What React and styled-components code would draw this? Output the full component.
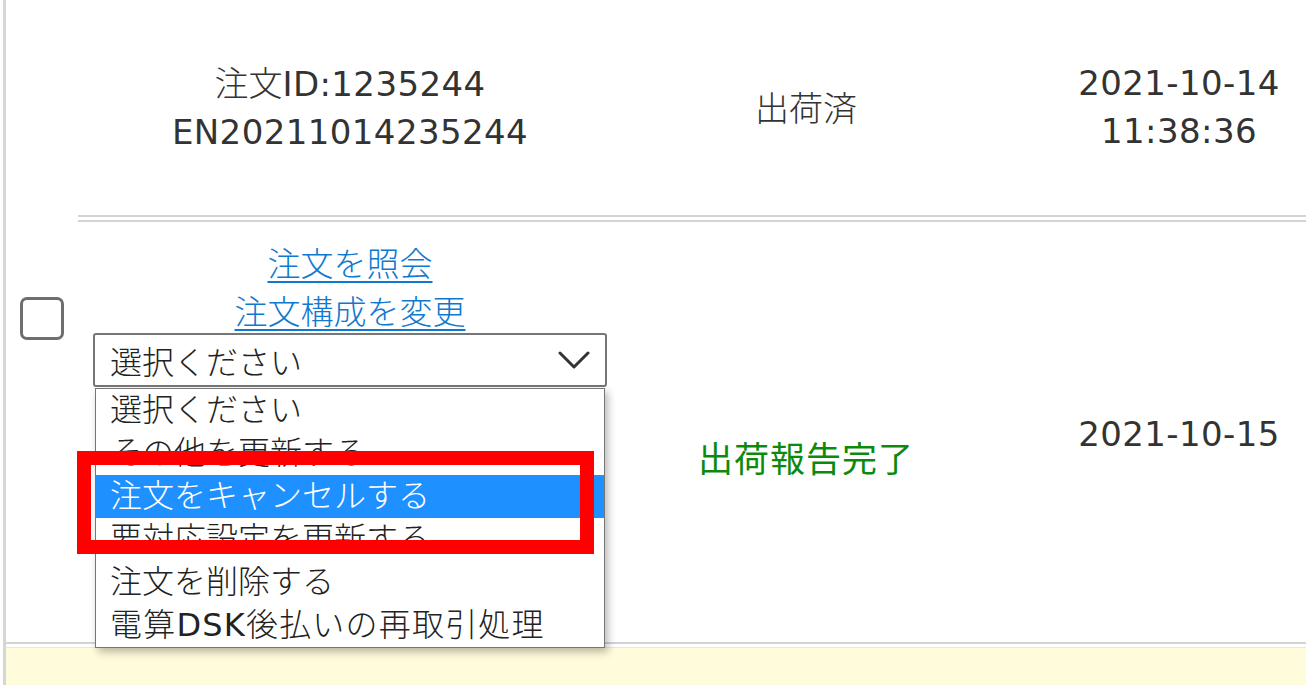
import React from "react";
import styled, { createGlobalStyle } from "styled-components";

const GlobalStyle = createGlobalStyle`
	html, body {
		margin: 0;
		padding: 0;
		background: #fff;
		overflow: hidden;
	}

	body {
		font-family: "DejaVu Sans", "Noto Sans CJK JP", sans-serif;
		color: #333;
	}
`;

const RULE = "#d3d3d3";

const Page = styled.div`
	width: 1300px;
	height: 685px;
	margin-left: 3px;
	border-left: 3px solid #d6d6d6;
	display: flex;
	flex-direction: column;
	overflow: hidden;
`;

const Row = styled.div`
	display: grid;
	grid-template-columns: 72px 544px 368px 378px;
	width: 1362px;
	height: ${(p) => p.$height}px;
	margin-top: ${(p) => p.$gap || 0}px;
	border-bottom: ${(p) => (p.$ruled ? `2px solid ${RULE}` : "none")};
	flex-shrink: 0;
`;

const Cell = styled.div`
	position: relative;
	display: flex;
	flex-direction: column;
	align-items: center;
	justify-content: ${(p) => (p.$top != null ? "flex-start" : "center")};
	padding-top: ${(p) => p.$top || 0}px;
	padding-bottom: ${(p) => p.$bottom || 0}px;
	border-top: 2px solid ${(p) => (p.$ruleTop ? RULE : "transparent")};
	border-bottom: ${(p) => (p.$ruleBottom ? `2px solid ${RULE}` : "none")};
	text-align: center;
	font-size: 34px;
	line-height: 48px;
	letter-spacing: 0.4px;
	color: #333;
	white-space: nowrap;
`;

const Kanji = styled.span`
	font-family: "Noto Sans CJK JP", sans-serif;
	font-weight: 300;
	letter-spacing: 0;
`;

const Status = styled.div`
	font-family: "Noto Sans CJK JP", sans-serif;
	font-size: ${(p) => (p.$done ? 35 : 34)}px;
	font-weight: ${(p) => (p.$done ? 400 : 300)};
	color: ${(p) => (p.$done ? "#0b8a0b" : "#333")};
	letter-spacing: ${(p) => (p.$done ? "1px" : "0")};
`;

const Check = styled.div`
	width: 38px;
	height: 37px;
	border: 3px solid #6e6e6e;
	border-radius: 7px;
	background: #fff;
`;

const LinkText = styled.a`
	font-family: "Noto Sans CJK JP", sans-serif;
	font-size: 33px;
	font-weight: 300;
	letter-spacing: 0;
	color: #0f78d0;
	text-decoration: underline;
	text-decoration-thickness: 2px;
	text-underline-offset: 5px;
	cursor: pointer;
`;

const SelectBox = styled.div`
	margin-top: -1px;
	width: 514px;
	height: 54px;
	border: 2px solid #767676;
	border-radius: 3px;
	background: #fff;
	display: flex;
	align-items: center;
	justify-content: space-between;
	padding: 0 15px;
	box-sizing: border-box;
	font-family: "Noto Sans CJK JP", sans-serif;
	font-size: 32px;
	font-weight: 300;
	letter-spacing: 0;
	color: #222;
`;

const Dropdown = styled.ul`
	position: absolute;
	left: 17px;
	top: 166px;
	width: 510px;
	margin: 0;
	padding: 0;
	list-style: none;
	border: 1px solid #767676;
	background: #fff;
	box-sizing: border-box;
	box-shadow: 3px 4px 8px rgba(0, 0, 0, 0.28);
	text-align: left;
	letter-spacing: 0;
	z-index: 2;
`;

const Option = styled.li`
	height: 43px;
	line-height: 43px;
	padding-left: 14px;
	font-size: 32px;
	font-weight: 300;
	letter-spacing: ${(p) => (p.$wide ? "1.2px" : "0")};
	color: ${(p) => (p.$active ? "#fff" : "#222")};
	background: ${(p) => (p.$active ? "#1e90ff" : "transparent")};
`;

const Latin = styled.span`
	font-weight: 400;
`;

const Highlight = styled.div`
	position: absolute;
	left: -1px;
	top: 229px;
	width: 517px;
	height: 103px;
	border: 14px solid #ff0000;
	box-sizing: border-box;
	pointer-events: none;
	z-index: 3;
`;

const Footer = styled.div`
	flex: 1;
	margin-top: 3px;
	border-top: 1px solid #eceac6;
	background: #fffcdc;
`;

const Chevron = () => (
	<svg width="32" height="18" viewBox="0 0 32 18">
		<polyline
			points="2,2 16,16 30,2"
			fill="none"
			stroke="#333"
			strokeWidth="3"
			strokeLinecap="round"
			strokeLinejoin="round"
		/>
	</svg>
);

const options = [
	"選択ください",
	"その他を更新する",
	"注文をキャンセルする",
	"要対応設定を更新する",
	"注文を削除する",
	<>
		電算<Latin>DSK</Latin>後払いの再取引処理
	</>,
];

const App = () => {
	return (
		<>
			<GlobalStyle />
			<Page>
				<Row $height={217}>
					<Cell $bottom={3} />
					<Cell $ruleBottom $bottom={3}>
						<div>
							<Kanji>注文</Kanji>ID:1235244
						</div>
						<div>EN20211014235244</div>
					</Cell>
					<Cell $ruleBottom $bottom={3}>
						<Status>出荷済</Status>
					</Cell>
					<Cell $ruleBottom $bottom={3}>
						<div>2021-10-14</div>
						<div>11:38:36</div>
					</Cell>
				</Row>
				<Row $height={422} $gap={3} $ruled>
					<Cell $top={75}>
						<Check />
					</Cell>
					<Cell $ruleTop $top={16}>
						<LinkText>注文を照会</LinkText>
						<LinkText>注文構成を変更</LinkText>
						<SelectBox>
							<span>選択ください</span>
							<Chevron />
						</SelectBox>
						<Dropdown>
							{options.map((label, i) => (
								<Option key={i} $active={i === 2} $wide={i === 5}>
									{label}
								</Option>
							))}
						</Dropdown>
						<Highlight />
					</Cell>
					<Cell $ruleTop $top={211}>
						<Status $done>出荷報告完了</Status>
					</Cell>
					<Cell $ruleTop $top={188}>
						<div>2021-10-15</div>
					</Cell>
				</Row>
				<Footer />
			</Page>
		</>
	);
};

export default App;
